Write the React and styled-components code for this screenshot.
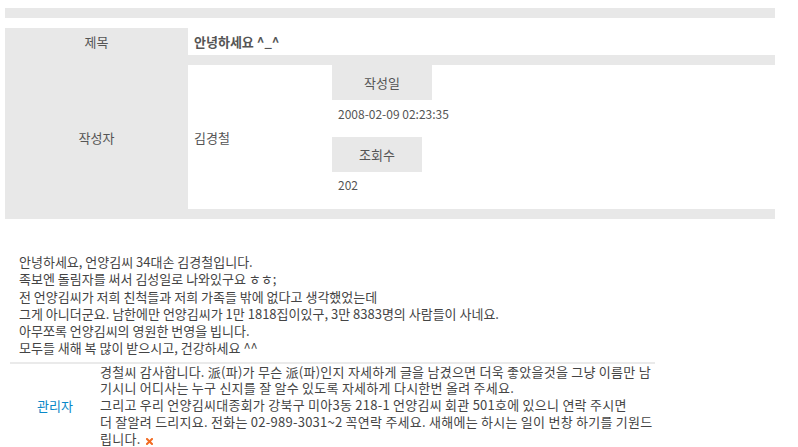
import React from "react";
import styled, { createGlobalStyle } from "styled-components";

const GlobalStyle = createGlobalStyle`
  body {
    margin: 0;
    background: #fff;
    font-family: "Noto Sans CJK KR", "Noto Sans", sans-serif;
    font-size: 13px;
    color: #555;
  }
`;

const Page = styled.div`
  width: 770px;
  padding: 8px 0 0 5px;
`;

const TopBar = styled.div`
  height: 10px;
  background: #e8e8e8;
`;

const InfoTable = styled.div`
  margin-top: 10px;
  display: grid;
  grid-template-columns: 183px 1fr;
  grid-template-rows: 27px 144px;
  row-gap: 10px;
  padding-bottom: 10px;
  background: #e8e8e8;
`;

const Label = styled.div`
  display: flex;
  align-items: center;
  justify-content: center;
  color: #555;
`;

const TitleCell = styled.div`
  display: flex;
  align-items: center;
  padding-left: 6px;
  background: #fff;
  font-weight: bold;
  color: #555;
`;

const AuthorCell = styled.div`
  display: grid;
  grid-template-columns: 144px 1fr;
  background: #fff;
`;

const Name = styled.div`
  display: flex;
  align-items: center;
  padding-left: 6px;
`;

const Meta = styled.div`
  display: flex;
  flex-direction: column;
  align-items: flex-start;
`;

const MetaHead = styled.div`
  width: ${(p) => p.$w}px;
  height: 35px;
  display: flex;
  align-items: center;
  justify-content: center;
  background: #e8e8e8;
`;

const MetaValue = styled.div`
  height: ${(p) => p.$h}px;
  margin-bottom: ${(p) => p.$gap || 0}px;
  display: flex;
  align-items: center;
  padding-left: 6px;
  font-size: 12px;
`;

const Body = styled.div`
  margin-top: 34px;
  padding-left: 14px;
  line-height: 17.3px;
  color: #444;
  white-space: nowrap;
`;

const CommentRow = styled.div`
  margin: 5px 0 0 5px;
  width: 645px;
  display: grid;
  grid-template-columns: 90px 1fr;
  border-top: 2px solid #eaeaea;
`;

const Writer = styled.div`
  display: flex;
  align-items: center;
  justify-content: center;
  color: #0a88c8;
`;

const CommentText = styled.div`
  line-height: 16.7px;
  letter-spacing: 0.25px;
  color: #444;
  white-space: nowrap;
`;

const DeleteIcon = styled.svg`
  width: 7px;
  height: 7px;
  margin-left: 5px;
  vertical-align: -1px;
`;

const bodyLines = [
  "안녕하세요, 언양김씨 34대손 김경철입니다.",
  "족보엔 돌림자를 써서 김성일로 나와있구요 ㅎㅎ;",
  "전 언양김씨가 저희 친척들과 저희 가족들 밖에 없다고 생각했었는데",
  "그게 아니더군요. 남한에만 언양김씨가 1만 1818집이있구, 3만 8383명의 사람들이 사네요.",
  "아무쪼록 언양김씨의 영원한 번영을 빕니다.",
  "모두들 새해 복 많이 받으시고, 건강하세요 ^^",
];

const commentLines = [
  "경철씨 감사합니다. 派(파)가 무슨 派(파)인지 자세하게 글을 남겼으면 더욱 좋았을것을 그냥 이름만 남",
  "기시니 어디사는 누구 신지를 잘 알수 있도록 자세하게 다시한번 올려 주세요.",
  "그리고 우리 언양김씨대종회가 강북구 미아3동 218-1 언양김씨 회관 501호에 있으니 연락 주시면",
  "더 잘알려 드리지요. 전화는 02-989-3031~2 꼭연락 주세요. 새해에는 하시는 일이 번창 하기를 기원드",
];

export default function App() {
  return (
    <>
      <GlobalStyle />
      <Page>
        <TopBar />
        <InfoTable>
          <Label>제목</Label>
          <TitleCell>안녕하세요 ^_^</TitleCell>
          <Label>작성자</Label>
          <AuthorCell>
            <Name>김경철</Name>
            <Meta>
              <MetaHead $w={100}>작성일</MetaHead>
              <MetaValue $h={26} $gap={11}>
                2008-02-09 02:23:35
              </MetaValue>
              <MetaHead $w={90}>조회수</MetaHead>
              <MetaValue $h={24}>202</MetaValue>
            </Meta>
          </AuthorCell>
        </InfoTable>
        <Body>
          {bodyLines.map((l) => (
            <div key={l}>{l}</div>
          ))}
        </Body>
        <CommentRow>
          <Writer>관리자</Writer>
          <CommentText>
            {commentLines.map((l) => (
              <div key={l}>{l}</div>
            ))}
            <div>
              립니다.
              <DeleteIcon viewBox="0 0 7 7">
                <path
                  d="M1 1 L6 6 M6 1 L1 6"
                  stroke="#f26b22"
                  strokeWidth="2"
                  strokeLinecap="square"
                />
              </DeleteIcon>
            </div>
          </CommentText>
        </CommentRow>
      </Page>
    </>
  );
}
